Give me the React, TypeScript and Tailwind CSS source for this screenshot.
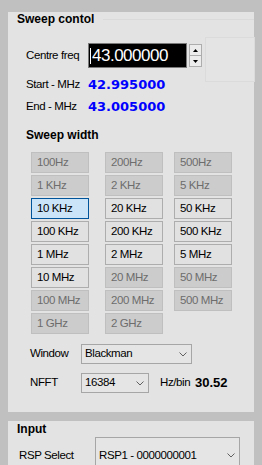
import React from 'react'

type Btn = { label: string; state: 'off' | 'on' | 'sel' }

const widths: Btn[] = [
  { label: '100Hz', state: 'off' },
  { label: '200Hz', state: 'off' },
  { label: '500Hz', state: 'off' },
  { label: '1 KHz', state: 'off' },
  { label: '2 KHz', state: 'off' },
  { label: '5 KHz', state: 'off' },
  { label: '10 KHz', state: 'sel' },
  { label: '20 KHz', state: 'on' },
  { label: '50 KHz', state: 'on' },
  { label: '100 KHz', state: 'on' },
  { label: '200 KHz', state: 'on' },
  { label: '500 KHz', state: 'on' },
  { label: '1 MHz', state: 'on' },
  { label: '2 MHz', state: 'on' },
  { label: '5 MHz', state: 'on' },
  { label: '10 MHz', state: 'on' },
  { label: '20 MHz', state: 'off' },
  { label: '50 MHz', state: 'off' },
  { label: '100 MHz', state: 'off' },
  { label: '200 MHz', state: 'off' },
  { label: '500 MHz', state: 'off' },
  { label: '1 GHz', state: 'off' },
  { label: '2 GHz', state: 'off' },
]

const btnClass = {
  off: 'bg-[#cccccc] border-[#bfbfbf] text-[#6d6d6d]',
  on: 'bg-[#e1e1e1] border-[#adadad] text-black',
  sel: 'bg-[#cce4f7] border-[#005499] text-black',
}

function Chevron() {
  return (
    <svg width="8" height="5" viewBox="0 0 8 5" className="shrink-0">
      <path d="M0.5 0.5 L4 4 L7.5 0.5" fill="none" stroke="#606060" strokeWidth="1" />
    </svg>
  )
}

function Dropdown({ value, w, h }: { value: string; w: string; h: string }) {
  return (
    <div className={`${w} ${h} flex items-center justify-between border border-[#a6a6a6] bg-[#e5e5e5] pl-[3px] pr-[4px]`}>
      <span>{value}</span>
      <Chevron />
    </div>
  )
}

export default function App() {
  return (
    <div
      className="w-[262px] h-[465px] overflow-hidden bg-[#c0c0c0] text-[11.5px] tracking-[-0.4px] text-black"
      style={{ fontFamily: '"Liberation Sans", Arial, sans-serif' }}
    >
      {/* Sweep control */}
      <div className="relative ml-[8px] mt-[12px] w-[246px] h-[400px] bg-[#e3e3e3] flex flex-col">
        <div className="absolute left-[95px] right-0 top-[7px] border-t border-[#dadada]" />
        <div className="absolute left-[197px] top-[25px] w-[50px] h-[45px] border border-[#dbdbdb] bg-[#e4e4e4]" />

        <div className="h-[13px] flex items-center pl-[9px] text-[12px] font-bold leading-none tracking-normal">
          Sweep contol
        </div>

        <div className="mt-[18px] h-[25px] flex items-center pl-[18px]">
          <span className="w-[62px]">Centre freq</span>
          <div className="w-[99px] h-[25px] bg-black border border-[#7a7a7a] flex items-center pl-[1px] text-white text-[17px] tracking-[-0.5px] leading-none">
            <span className="w-[1px] h-[16px] bg-white mr-[1px]" />
            43.000000
          </div>
          <div className="ml-[2px] w-[13px] h-[23px] flex flex-col">
            <div className="flex-1 border border-[#adadad] bg-[#ececec] flex items-center justify-center">
              <svg width="5" height="3" viewBox="0 0 5 3"><path d="M2.5 0 L5 3 L0 3 Z" fill="#000" /></svg>
            </div>
            <div className="flex-1 border border-t-0 border-[#adadad] bg-[#ececec] flex items-center justify-center">
              <svg width="5" height="3" viewBox="0 0 5 3"><path d="M0 0 L5 0 L2.5 3 Z" fill="#000" /></svg>
            </div>
          </div>
        </div>

        <div className="mt-[8px] h-[18px] flex items-center pl-[18px]">
          <span className="w-[62px]">Start - MHz</span>
          <span className="text-[13px] font-bold text-[#0000ff] tracking-normal" style={{ fontFamily: '"DejaVu Sans", Verdana, sans-serif' }}>
            42.995000
          </span>
        </div>
        <div className="mt-[4px] h-[18px] flex items-center pl-[18px]">
          <span className="w-[62px]">End - MHz</span>
          <span className="text-[13px] font-bold text-[#0000ff] tracking-normal" style={{ fontFamily: '"DejaVu Sans", Verdana, sans-serif' }}>
            43.005000
          </span>
        </div>

        <div className="mt-[12px] h-[14px] flex items-center pl-[18px] text-[12px] font-bold leading-none tracking-normal">
          Sweep width
        </div>

        {/* width buttons */}
        <div className="mt-[10px] pl-[23px] grid grid-cols-[74px_69px_58px] gap-y-[2px]">
          {widths.map((b) => (
            <div key={b.label} className={`w-[58px] h-[21px] border flex items-center pl-[5px] ${btnClass[b.state]}`}>
              {b.label}
            </div>
          ))}
        </div>

        <div className="mt-[10px] h-[20px] flex items-center pl-[22px]">
          <span className="w-[51px]">Window</span>
          <Dropdown value="Blackman" w="w-[111px]" h="h-[20px]" />
        </div>
        <div className="mt-[9px] h-[20px] flex items-center pl-[22px]">
          <span className="w-[51px]">NFFT</span>
          <Dropdown value="16384" w="w-[68px]" h="h-[20px]" />
          <span className="ml-[11px] w-[35px]">Hz/bin</span>
          <span className="text-[13px] font-bold tracking-normal">30.52</span>
        </div>
      </div>

      {/* Input */}
      <div className="ml-[8px] mt-[9px] w-[246px] h-[60px] bg-[#e3e3e3] flex flex-col">
        <div className="h-[16px] flex items-center pl-[9px] text-[12px] font-bold leading-none tracking-normal">
          Input
        </div>
        <div className="h-[37px] flex items-center pl-[11px]">
          <span className="w-[76px]">RSP Select</span>
          <Dropdown value="RSP1 - 0000000001" w="w-[145px]" h="h-[37px]" />
        </div>
      </div>
    </div>
  )
}
